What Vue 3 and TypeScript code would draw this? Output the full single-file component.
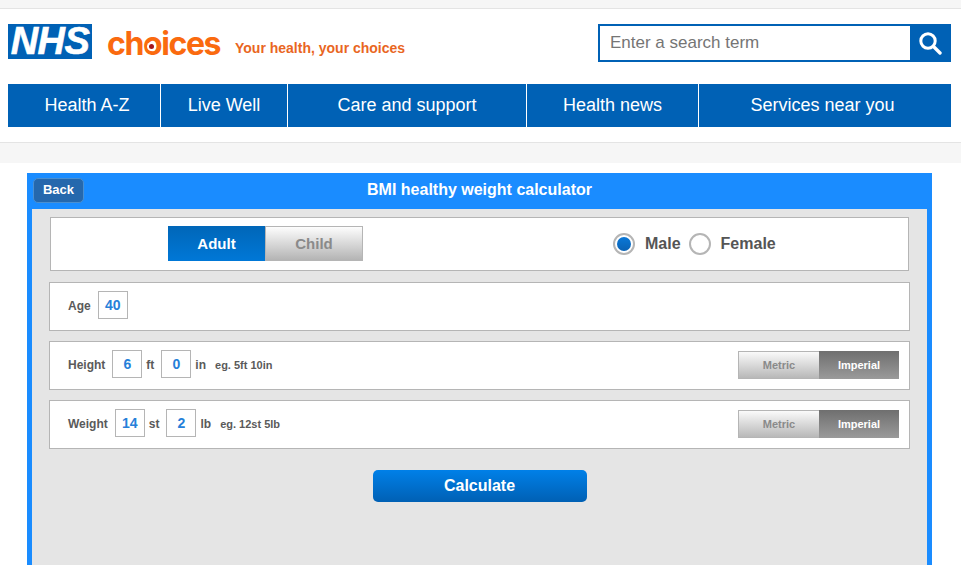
<script setup lang="ts">
const navItems = [
  { label: 'Health A-Z', width: 153 },
  { label: 'Live Well', width: 127 },
  { label: 'Care and support', width: 239 },
  { label: 'Health news', width: 172 },
  { label: 'Services near you', width: 252 },
]
</script>

<template>
  <div class="page">
    <header class="site-header">
      <div class="brand-row">
        <div class="nhs-logo">NHS</div>
        <div class="choices">ch<span class="choices-o">o</span>ices</div>
        <div class="tagline">Your health, your choices</div>
        <form class="search" @submit.prevent>
          <input class="search-input" type="text" placeholder="Enter a search term" />
          <button class="search-btn" type="button" aria-label="Search">
            <svg width="24" height="24" viewBox="0 0 24 24" fill="none">
              <circle cx="10" cy="10" r="7.2" stroke="#fff" stroke-width="3" />
              <path d="M15.5 15.5L22 22" stroke="#fff" stroke-width="3.4" stroke-linecap="round" />
            </svg>
          </button>
        </form>
      </div>
      <nav class="main-nav">
        <a
          v-for="item in navItems"
          :key="item.label"
          class="nav-item"
          :style="{ width: item.width + 'px' }"
        >{{ item.label }}</a>
      </nav>
    </header>
    <div class="band"></div>

    <main class="calc">
      <div class="calc-head">
        <button class="back" type="button">Back</button>
        <h1 class="calc-title">BMI healthy weight calculator</h1>
      </div>
      <div class="calc-body">
        <section class="row row-top">
          <div class="switch">
            <span class="switch-on">Adult</span>
            <span class="switch-off">Child</span>
          </div>
          <div class="gender">
            <span class="radio radio-on"></span>
            <span class="gender-label">Male</span>
            <span class="radio"></span>
            <span class="gender-label">Female</span>
          </div>
        </section>

        <section class="row">
          <span class="field-label">Age</span>
          <span class="box">40</span>
        </section>

        <section class="row">
          <span class="field-label">Height</span>
          <span class="box">6</span>
          <span class="unit">ft</span>
          <span class="box">0</span>
          <span class="unit">in</span>
          <span class="hint">eg. 5ft 10in</span>
          <div class="mode">
            <span class="mode-off">Metric</span>
            <span class="mode-on">Imperial</span>
          </div>
        </section>

        <section class="row">
          <span class="field-label">Weight</span>
          <span class="box">14</span>
          <span class="unit">st</span>
          <span class="box">2</span>
          <span class="unit">lb</span>
          <span class="hint">eg. 12st 5lb</span>
          <div class="mode">
            <span class="mode-off">Metric</span>
            <span class="mode-on">Imperial</span>
          </div>
        </section>

        <div class="actions">
          <button class="calculate" type="button">Calculate</button>
        </div>
      </div>
    </main>
  </div>
</template>

<style>
html,
body {
  margin: 0;
  height: 100%;
  overflow: hidden;
  background: #fff;
}
</style>

<style scoped>
.page {
  width: 961px;
  height: 565px;
  overflow: hidden;
  font-family: 'Liberation Sans', Arial, sans-serif;
  background: #fff;
}

.site-header {
  margin-top: 8px;
  padding: 15px 10px 15px 8px;
  height: 135px;
  box-sizing: border-box;
  border-top: 1px solid #e4e4e4;
  border-bottom: 1px solid #e4e4e4;
  position: relative;
}

.site-header::before {
  content: '';
  position: absolute;
  left: 0;
  right: 0;
  top: -9px;
  height: 8px;
  background: #f6f6f6;
}

.brand-row {
  display: flex;
  align-items: flex-start;
  height: 38px;
}

.nhs-logo {
  width: 84px;
  height: 35px;
  background: #0061b5;
  color: #fff;
  font-size: 38px;
  line-height: 35px;
  font-weight: 700;
  font-style: italic;
  letter-spacing: -0.5px;
  text-align: center;
  -webkit-text-stroke: 0.6px #fff;
}

.choices {
  margin-left: 15px;
  margin-top: 2px;
  width: 113px;
  font-family: Inter, sans-serif;
  font-size: 32px;
  line-height: 36px;
  font-weight: 700;
  letter-spacing: -1.4px;
  color: #fa6a0f;
}

.choices-o {
  position: relative;
}

.choices-o::after {
  content: '';
  position: absolute;
  left: 50%;
  top: 57%;
  width: 5px;
  height: 5px;
  margin: -2.5px 0 0 -3px;
  border-radius: 50%;
  background: #a3161c;
  box-shadow: 0 0 0 2px #fff;
}

.tagline {
  margin-left: 15px;
  margin-top: 16px;
  font-size: 14px;
  line-height: 16px;
  font-weight: 700;
  color: #e9661f;
}

.search {
  margin-left: auto;
  display: flex;
  width: 353px;
  height: 38px;
  box-sizing: border-box;
  border: 2px solid #0061b5;
}

.search-input {
  flex: 1;
  min-width: 0;
  border: 0;
  outline: 0;
  padding: 0 10px;
  font: 17px 'Liberation Sans', Arial, sans-serif;
  color: #333;
  background: #fff;
}

.search-input::placeholder {
  color: #757575;
  opacity: 1;
}

.search-btn {
  width: 39px;
  border: 0;
  padding: 0;
  background: #0061b5;
  display: flex;
  align-items: center;
  justify-content: center;
}

.main-nav {
  display: flex;
  margin-top: 22px;
  height: 43px;
  width: 943px;
  background: #0061b5;
}

.nav-item {
  flex: none;
  box-sizing: border-box;
  border-right: 1px solid #fff;
  color: #fff;
  font-size: 18px;
  line-height: 43px;
  text-align: center;
}

.nav-item:first-child {
  padding-left: 6px;
}

.nav-item:last-child {
  border-right: 0;
  padding-right: 5px;
}

.band {
  height: 20px;
  background: #f6f6f6;
}

.calc {
  margin: 10px 0 0 27px;
  width: 905px;
  height: 420px;
  box-sizing: border-box;
  border: 5px solid #1a8cff;
  border-top: 0;
  background: #e5e5e5;
}

.calc-head {
  position: relative;
  margin: 0 -5px;
  height: 36px;
  background: #1a8cff;
  display: flex;
  align-items: center;
  justify-content: center;
}

.back {
  position: absolute;
  left: 6px;
  top: 5px;
  width: 51px;
  height: 25px;
  padding: 0 0 2px;
  box-sizing: border-box;
  border: 1px solid #4a8fd0;
  border-radius: 5px;
  background: #2568ad;
  color: #fff;
  font: 700 13px 'Liberation Sans', Arial, sans-serif;
}

.calc-title {
  margin: 0 0 2px;
  color: #fff;
  font-size: 16px;
  line-height: 20px;
  font-weight: 700;
}

.calc-body {
  padding: 8px 17px 0;
}

.row {
  height: 49px;
  box-sizing: border-box;
  margin-bottom: 10px;
  padding: 0 10px 3px 18px;
  display: flex;
  align-items: center;
  background: #fff;
  border: 1px solid #b5b5b5;
}

.row-top {
  height: 54px;
  margin: 0 1px 11px;
  padding: 0;
  position: relative;
}

.switch {
  display: flex;
  margin-left: 117px;
  margin-bottom: 2px;
  height: 35px;
  font-size: 15px;
  font-weight: 700;
}

.switch-on,
.switch-off {
  width: 97px;
  box-sizing: border-box;
  text-align: center;
  line-height: 35px;
}

.switch-on {
  color: #fff;
  background: linear-gradient(#0066b8, #0078d7);
}

.switch-off {
  width: 98px;
  color: #8a8a8a;
  line-height: 33px;
  border: 1px solid #b5b5b5;
  background: linear-gradient(#fdfdfd, #b4b4b4);
}

.gender {
  display: flex;
  align-items: center;
  margin-left: 250px;
  font-size: 16px;
  font-weight: 700;
  color: #555;
}

.radio {
  width: 22px;
  height: 22px;
  box-sizing: border-box;
  border: 2px solid #b5b5b5;
  border-radius: 50%;
  background: #fff;
  margin-right: 10px;
}

.radio-on {
  padding: 2px;
  background: linear-gradient(#0a78d8, #0a62b4) content-box;
}

.gender-label {
  margin-right: 8px;
}

.field-label {
  margin-top: 1px;
  font-size: 12px;
  font-weight: 700;
  color: #5a5a5a;
  margin-right: 7px;
}

.box {
  width: 30px;
  height: 28px;
  box-sizing: border-box;
  border: 1px solid #b5b5b5;
  color: #2680d9;
  font-size: 14px;
  font-weight: 700;
  line-height: 26px;
  text-align: center;
}

.unit {
  margin: 1px 4px 0;
  font-size: 12px;
  font-weight: 700;
  color: #5a5a5a;
}

.unit:has(+ .box) {
  margin-right: 7px;
}

.hint {
  margin: 1px 0 0 5px;
  font-size: 11px;
  font-weight: 700;
  color: #5a5a5a;
}

.mode {
  margin: 2px 0 0 auto;
  display: flex;
  width: 161px;
  height: 28px;
  font-size: 11px;
  font-weight: 700;
  line-height: 28px;
  text-align: center;
}

.mode-off {
  width: 81px;
  box-sizing: border-box;
  color: #8a8a8a;
  line-height: 26px;
  border: 1px solid #b5b5b5;
  border-right: 0;
  background: linear-gradient(#fafafa, #b8b8b8);
}

.mode-on {
  width: 80px;
  color: #fff;
  background: linear-gradient(#6f6f6f, #9a9a9a);
}

.actions {
  display: flex;
  justify-content: center;
  padding-top: 11px;
}

.calculate {
  width: 214px;
  height: 32px;
  padding: 0;
  border: 0;
  border-radius: 5px;
  background: linear-gradient(#0080e8, #0060b4);
  color: #fff;
  font: 700 16px 'Liberation Sans', Arial, sans-serif;
}
</style>
